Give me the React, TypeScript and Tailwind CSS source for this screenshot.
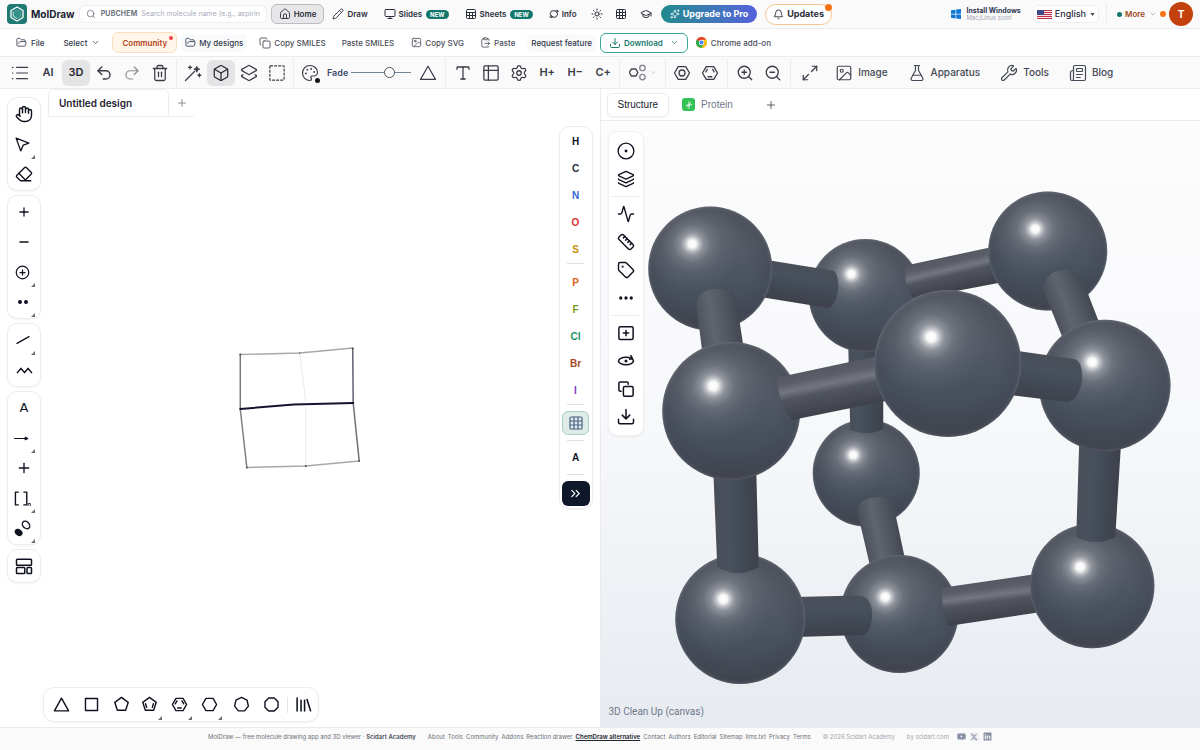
import type { ReactNode } from "react";
import {
  Activity, Bell, Box, ChevronDown, ChevronsRight, CirclePlus, ClipboardPaste, Copy,
  Download, Ellipsis, Eraser, FlaskConical, FolderOpen, GraduationCap, Grid3x3, Hand, House, Image as ImageIcon,
  Layers, Layers2, Maximize2, Minus, Monitor, Newspaper, Palette, Pencil, Plus,
  Redo2, Ruler, Search, Settings, Sparkles, Sun, Tag, Trash2, Type, Undo2,
  Wrench, ZoomIn, ZoomOut,
} from "lucide-react";
import { FaLinkedin, FaXTwitter, FaYoutube } from "react-icons/fa6";

type Glyph = { children: ReactNode; className?: string; width?: number };

function Draw({ children, className = "size-[18px]", width = 1.6 }: Glyph) {
  return (
    <svg viewBox="0 0 24 24" className={className} fill="none" stroke="currentColor" strokeWidth={width} strokeLinecap="round" strokeLinejoin="round" aria-hidden="true">
      {children}
    </svg>
  );
}

function Logo() {
  return (
    <svg viewBox="0 0 40 40" className="size-5 shrink-0" aria-hidden="true">
      <rect width="40" height="40" rx="8" fill="#1f7a74" />
      <path d="M20 6 32 13v14L20 34 8 27V13Z" fill="none" stroke="#fff" strokeWidth="2.600" strokeLinejoin="round" />
      <path d="M20 11.500 27.500 16v8.500L20 29l-7.500-4.500V16Z" fill="#2f9189" stroke="#7fc0b9" strokeWidth="1.200" />
      <path d="M12.500 15.500v9L20 29" fill="none" stroke="#e4f4f2" strokeWidth="1.500" />
    </svg>
  );
}

function Flag() {
  return (
    <svg viewBox="0 0 30 18" className="h-[9px] w-[15px]" aria-hidden="true">
      <rect width="30" height="18" fill="#f3e4e6" />
      {[0, 4, 8, 12, 16].map((y) => (
        <rect key={y} y={y} width="30" height="2" fill="#c2334b" />
      ))}
      <rect width="14" height="10" fill="#3c4a8c" />
    </svg>
  );
}

function ChromeLogo() {
  return (
    <svg viewBox="0 0 24 24" className="size-[11px]" aria-hidden="true">
      <circle cx="12" cy="12" r="12" fill="#fbc116" />
      <path d="M12 12 1.600 6A12 12 0 0 1 22.400 6Z" fill="#e33b2e" />
      <path d="M1.600 6A12 12 0 0 0 12 24l5.200-9L12 12Z" fill="#2da94f" />
      <path d="M12 6h10.400A12 12 0 0 1 12 24l5.200-9Z" fill="#fbc116" />
      <circle cx="12" cy="12" r="5.800" fill="#fff" />
      <circle cx="12" cy="12" r="4.500" fill="#4285f4" />
    </svg>
  );
}

function NavItem({ icon, label, isNew }: { icon: ReactNode; label: string; isNew?: boolean }) {
  return (
    <a href="#" className="flex h-5 items-center gap-[3px] px-2 text-[8px] font-semibold text-[#2b2e3b]">
      {icon}
      {label}
      {isNew && <span className="ml-px rounded-full bg-[#11766b] px-1 text-[6px] leading-[9px] font-bold text-white">NEW</span>}
    </a>
  );
}

function IconButton({ label, children, active }: { label: string; children: ReactNode; active?: boolean }) {
  return (
    <button
      type="button"
      aria-label={label}
      className={
        active
          ? "relative flex h-[26px] w-7 items-center justify-center rounded-md bg-[#e4e4e6] text-[11px] font-semibold text-[#24262f]"
          : "relative flex h-[26px] w-7 items-center justify-center text-[11px] font-semibold text-[#3a3d47]"
      }
    >
      {children}
    </button>
  );
}

function Divider() {
  return <span className="mx-[2px] h-7 w-px bg-[#ececef]" />;
}

function WideDivider() {
  return <span className="mx-[3px] h-7 w-px bg-[#ececef]" />;
}

function Corner() {
  return (
    <svg viewBox="0 0 4 4" className="absolute right-1 bottom-0 size-1" aria-hidden="true">
      <path d="M4 0v4H0Z" fill="#6d6d75" />
    </svg>
  );
}

function Tool({ label, children, more }: { label: string; children: ReactNode; more?: boolean }) {
  return (
    <button type="button" aria-label={label} className="relative flex h-[30px] w-[30px] items-center justify-center text-[#10131f]">
      {children}
      {more && <Corner />}
    </button>
  );
}

function Panel({ children }: { children: ReactNode }) {
  return <div className="flex flex-col items-center rounded-[10px] border border-[#ededf0] bg-white p-px shadow-xs">{children}</div>;
}

function TopBar() {
  return (
    <header className="flex h-[29px] items-center border-b border-[#ececee] bg-[#fafafb] px-[7px]">
      <a href="#" className="flex items-center gap-1 text-[10px] font-bold text-[#20222e]">
        <Logo />
        MolDraw
      </a>
      <label className="mr-1 ml-1 flex h-[18px] w-[188px] items-center gap-1 rounded-md border border-[#eeeef1] bg-white px-[6px]">
        <Search className="size-[10px] shrink-0 text-[#777b87]" strokeWidth={2} />
        <span className="ml-px text-[7px] font-bold tracking-wide text-[#6c7280]">PUBCHEM</span>
        <input
          className="min-w-0 flex-1 bg-transparent text-[7px] text-[#333] outline-none placeholder:text-[#a6abb8]"
          placeholder="Search molecule name (e.g., aspirin, caffeine)"
        />
      </label>
      <nav className="flex items-center">
        <a href="#" className="flex h-5 items-center gap-[3px] rounded-md border border-[#bcbcc2] bg-[#e7e7e9] px-[7px] text-[8px] font-semibold text-[#2b2e3b]">
          <House className="size-3" strokeWidth={1.800} />
          Home
        </a>
        <NavItem icon={<Pencil className="size-3" strokeWidth={1.800} />} label="Draw" />
        <NavItem icon={<Monitor className="size-3" strokeWidth={2} />} label="Slides" isNew />
        <NavItem
          icon={
            <Draw className="size-3" width={2}>
              <rect x="3" y="3" width="18" height="18" rx="2" />
              <path d="M3 9h18M3 15h18M9 9v12M15 9v12" />
            </Draw>
          }
          label="Sheets"
          isNew
        />
        <NavItem
          icon={
            <Draw className="size-[10px]" width={2.200}>
              <path d="M7 4.500h9L21 12l-4.500 7.500H8L3 12Z" />
              <circle cx="19" cy="5.500" r="2.500" fill="#fafafb" />
              <circle cx="5" cy="18.500" r="2.500" fill="#fafafb" />
            </Draw>
          }
          label="Info"
        />
        <button type="button" aria-label="Theme" className="flex w-6 justify-center text-[#2b2e3b]"><Sun className="size-3" strokeWidth={2} /></button>
        <button type="button" aria-label="Periodic table" className="flex w-[25px] justify-center text-[#2b2e3b]"><Grid3x3 className="size-3" strokeWidth={2} /></button>
        <button type="button" aria-label="Learn" className="flex w-6 justify-center text-[#2b2e3b]"><GraduationCap className="size-3" strokeWidth={2} /></button>
      </nav>
      <button type="button" className="ml-[3px] flex h-[18px] items-center gap-[3px] rounded-full bg-linear-to-r from-[#1d8a8c] to-[#5560dc] px-[9px] text-[9px] font-bold text-white">
        <Sparkles className="size-[10px]" strokeWidth={1.800} />
        Upgrade to Pro
      </button>
      <button type="button" className="relative ml-2 flex h-[21px] items-center gap-[3px] rounded-full border border-[#f4c48d] bg-white px-[7px] text-[9px] font-bold text-[#2b2e3b]">
        <Bell className="size-[11px]" strokeWidth={2} />
        Updates
        <span className="absolute -top-px -right-px size-[7px] rounded-full bg-[#f97316]" />
      </button>
      <div className="ml-auto flex items-center">
        <a href="#" className="flex items-center gap-[5px]">
          <svg viewBox="0 0 10 10" className="size-[10px]" fill="#0f78d4" aria-hidden="true">
            <path d="M0 1.300 4.500.7v4H0ZM5.200.6 10 0v4.700H5.200ZM0 5.400h4.500v4L0 8.700ZM5.200 5.400H10V10l-4.800-.6Z" />
          </svg>
          <span className="flex flex-col text-[7px] leading-[8px] font-bold text-[#2b3550]">
            Install Windows
            <span className="text-[6px] leading-[6px] font-normal text-[#a0a5b3]">Mac/Linux soon</span>
          </span>
        </a>
        <button type="button" className="ml-3 flex h-[18px] items-center gap-[3px] rounded-md border border-[#eeeef0] bg-white px-[3px] text-[9px] font-medium text-[#2b2e3b]">
          <Flag />
          English
          <svg viewBox="0 0 6 4" className="ml-px h-[3px] w-[5px]" aria-hidden="true"><path d="M0 0h6L3 4Z" fill="#555" /></svg>
        </button>
        <span className="mx-[7px] h-5 w-px bg-[#ececef]" />
        <button type="button" className="ml-[3px] flex items-center text-[8px] font-semibold text-[#a2481d]">
          <span className="mr-[3px] size-[5px] rounded-full bg-[#11766b]" />
          More
          <ChevronDown className="ml-1 size-2 text-[#9a9aa0]" />
        </button>
        <span className="mr-[3px] ml-[3px] size-[6px] rounded-full bg-[#f97316]" />
        <button type="button" aria-label="Account" className="flex size-6 items-center justify-center rounded-full bg-[#c2410c] text-[10px] font-bold text-white">T</button>
      </div>
    </header>
  );
}

function MenuBar() {
  return (
    <div className="flex h-[27px] items-center bg-white pl-4 text-[8px] font-medium text-[#33384a]">
      <button type="button" className="flex items-center gap-1"><FolderOpen className="size-[11px]" strokeWidth={1.800} />File</button>
      <button type="button" className="ml-[19px] flex items-center gap-1">Select<ChevronDown className="size-[9px]" /></button>
      <button type="button" className="relative ml-3 flex h-[21px] items-center rounded-md border border-[#f6dfc2] bg-[#fff5e8] px-[9px] font-semibold text-[#b5431b]">
        Community
        <span className="absolute top-[3px] right-[3px] size-1 rounded-full bg-[#ef4444]" />
      </button>
      <button type="button" className="ml-1 flex h-[18px] items-center gap-[3px] rounded bg-[#f8fafc] px-1"><FolderOpen className="size-[11px]" strokeWidth={1.800} />My designs</button>
      <button type="button" className="ml-3 flex items-center gap-[3px] text-[#4b4e58]"><Copy className="size-3" strokeWidth={1.800} />Copy SMILES</button>
      <button type="button" className="ml-4 text-[#4b4e58]">Paste SMILES</button>
      <button type="button" className="ml-[17px] flex items-center gap-[3px] text-[#4b4e58]"><ImageIcon className="size-[11px]" strokeWidth={1.800} />Copy SVG</button>
      <button type="button" className="ml-4 flex items-center gap-[3px] text-[#4b4e58]"><ClipboardPaste className="size-[11px]" strokeWidth={1.800} />Paste</button>
      <button type="button" className="ml-3 h-[18px] rounded bg-[#f8fafc] px-1">Request feature</button>
      <button type="button" className="ml-1 flex h-5 items-center gap-[3px] rounded-md border border-[#3aa596] bg-white px-2 font-semibold text-[#16786c]">
        <Download className="size-3" strokeWidth={2} />
        Download
        <ChevronDown className="ml-1 size-[9px]" />
      </button>
      <a href="#" className="ml-2 flex items-center gap-1 text-[#4b4e58]"><ChromeLogo />Chrome add-on</a>
    </div>
  );
}

function LinkTool({ icon, label }: { icon: ReactNode; label: string }) {
  return (
    <button type="button" className="flex items-center gap-[5px] text-[10px] font-medium text-[#444853]">
      {icon}
      {label}
    </button>
  );
}

function ToolBar() {
  const icon = "size-[18px]";
  return (
    <div className="flex h-[33px] items-center border-y border-[#ececee] bg-[#fafafb] pl-[6px]">
      <IconButton label="List">
        <Draw><path d="M7.500 4.500H22M7.500 12H22M7.500 19.500H22M2 4.500h.5M2 12h.5M2 19.500h.5" /></Draw>
      </IconButton>
      <IconButton label="AI">AI</IconButton>
      <IconButton label="3D" active>3D</IconButton>
      <IconButton label="Undo"><Undo2 className={icon} strokeWidth={1.900} /></IconButton>
      <IconButton label="Redo"><Redo2 className="size-[18px] text-[#8b8d95]" strokeWidth={1.600} /></IconButton>
      <IconButton label="Delete"><Trash2 className={icon} strokeWidth={1.700} /></IconButton>
      <Divider />
      <IconButton label="Clean up">
        <Draw width={1.700}>
          <path d="M2 22 14 10" />
          <path d="m17 3.500 1 2.500 2.500 1-2.500 1-1 2.500-1-2.500-2.500-1 2.500-1Z" fill="currentColor" />
          <path d="M8 2.500v4M6 4.500h4M20.500 13v4M18.500 15h4" />
        </Draw>
      </IconButton>
      <IconButton label="3D view" active><Box className={icon} strokeWidth={1.600} /></IconButton>
      <IconButton label="Layers"><Layers2 className={icon} strokeWidth={1.700} /></IconButton>
      <IconButton label="Select area">
        <Draw><rect x="2.500" y="2.500" width="19" height="19" rx="1" strokeDasharray="2.600 2.800" /></Draw>
      </IconButton>
      <Divider />
      <IconButton label="Colours">
        <Palette className={icon} strokeWidth={1.600} />
        <span className="absolute right-1 bottom-[3px] size-[5px] rounded-full bg-[#15161c]" />
      </IconButton>
      <label className="ml-[3px] flex items-center gap-[3px] text-[9px] font-semibold text-[#404a70]">
        Fade
        <input
          type="range"
          min={0}
          max={100}
          defaultValue={66}
          className="h-3 w-[60px] appearance-none bg-transparent [&::-webkit-slider-runnable-track]:h-px [&::-webkit-slider-runnable-track]:bg-[#71869c] [&::-webkit-slider-thumb]:-mt-[5px] [&::-webkit-slider-thumb]:size-[11px] [&::-webkit-slider-thumb]:appearance-none [&::-webkit-slider-thumb]:rounded-full [&::-webkit-slider-thumb]:border [&::-webkit-slider-thumb]:border-[#50545f] [&::-webkit-slider-thumb]:bg-white"
        />
      </label>
      <span className="w-[3px]" />
      <IconButton label="Triangle"><Draw><path d="M12 3 22 20.500H2Z" /></Draw></IconButton>
      <WideDivider />
      <IconButton label="Text"><Type className={icon} strokeWidth={1.700} /></IconButton>
      <IconButton label="Table">
        <Draw width={1.700}><rect x="2.500" y="2.500" width="19" height="19" rx="1.500" /><path d="M2.500 8.500h19M8.500 2.500v19" /></Draw>
      </IconButton>
      <IconButton label="Settings"><Settings className={icon} strokeWidth={1.700} /></IconButton>
      <IconButton label="Add hydrogens">H+</IconButton>
      <IconButton label="Remove hydrogens">H−</IconButton>
      <IconButton label="Add carbon">C+</IconButton>
      <Divider />
      <button type="button" aria-label="Fragments" className="flex h-[26px] w-[41px] items-center justify-center gap-1 text-[#44474f]">
        <Draw className="size-[17px]" width={2}>
          <path d="M3.500 7h6l3 5-3 5h-6l-3-5Z" />
          <circle cx="19" cy="5.500" r="3.800" stroke="#8b8d95" />
          <circle cx="19" cy="18.500" r="3.800" stroke="#8b8d95" />
        </Draw>
        <ChevronDown className="size-[7px] text-[#b5b5bb]" />
      </button>
      <Divider />
      <IconButton label="Benzene ring">
        <Draw width={1.700}><path d="M7 3.500h10L22 12l-5 8.500H7L2 12Z" /><circle cx="12" cy="12" r="4" /></Draw>
      </IconButton>
      <IconButton label="Kekulé ring">
        <Draw width={1.700}><path d="M7 3.500h10L22 12l-5 8.500H7L2 12Z" /><path d="M9.500 17h5M6.500 10.500l2-3.500M17.500 10.500l-2-3.500" /></Draw>
      </IconButton>
      <WideDivider />
      <IconButton label="Zoom in"><ZoomIn className={icon} strokeWidth={1.700} /></IconButton>
      <IconButton label="Zoom out"><ZoomOut className={icon} strokeWidth={1.700} /></IconButton>
      <WideDivider />
      <span className="w-[2px]" />
      <IconButton label="Fit"><Maximize2 className={icon} strokeWidth={1.600} /></IconButton>
      <div className="ml-[11px] flex items-center gap-5">
        <LinkTool icon={<ImageIcon className="size-[18px]" strokeWidth={1.600} />} label="Image" />
        <LinkTool icon={<FlaskConical className="size-[18px]" strokeWidth={1.600} />} label="Apparatus" />
        <LinkTool icon={<Wrench className="size-[18px]" strokeWidth={1.600} />} label="Tools" />
        <LinkTool icon={<Newspaper className="size-[18px]" strokeWidth={1.600} />} label="Blog" />
      </div>
    </div>
  );
}

function SideTools() {
  return (
    <div className="absolute top-2 left-[7px] flex flex-col gap-1">
      <Panel>
        <Tool label="Pan"><Hand className="size-[18px]" strokeWidth={1.900} /></Tool>
        <Tool label="Select" more>
          <Draw className="mr-[3px] size-[17px]" width={1.900}><path d="M3 3l18 7-8 3-3.500 8Z" /></Draw>
        </Tool>
        <Tool label="Erase"><Eraser className="size-[18px]" strokeWidth={1.800} /></Tool>
      </Panel>
      <Panel>
        <Tool label="Positive charge"><Plus className="size-[14px]" strokeWidth={2.200} /></Tool>
        <Tool label="Negative charge"><Minus className="size-[14px]" strokeWidth={2.200} /></Tool>
        <Tool label="Circled charge" more><CirclePlus className="mr-[3px] size-[15px]" strokeWidth={2} /></Tool>
        <Tool label="Lone pair" more>
          <svg viewBox="0 0 12 6" className="mr-[3px] h-[6px] w-3" fill="#10131f" aria-hidden="true"><circle cx="3" cy="3" r="2" /><circle cx="9" cy="3" r="2" /></svg>
        </Tool>
      </Panel>
      <Panel>
        <Tool label="Bond" more><Draw className="mr-[3px] size-4" width={2}><path d="M3 17 21 7" /></Draw></Tool>
        <Tool label="Chain"><Draw className="size-[17px]" width={2.200}><path d="m2 15 5-6 5 6 5-6 5 6" /></Draw></Tool>
      </Panel>
      <Panel>
        <Tool label="Text"><span className="font-['DejaVu_Sans',sans-serif] text-[13px]">A</span></Tool>
        <Tool label="Reaction arrow" more>
          <Draw className="mr-[5px] size-[15px]" width={1.900}><path d="M1 12h20" /><path d="m18 10 4 2-4 2Z" fill="currentColor" /></Draw>
        </Tool>
        <Tool label="Plus"><Plus className="size-4" strokeWidth={2} /></Tool>
        <Tool label="Brackets" more>
          <Draw className="mr-[3px] size-[17px]" width={2}>
            <path d="M6 3H2v18h4M14 3h4v18h-4" />
            <path d="M20 22v-3h3v3" strokeWidth="1.200" />
          </Draw>
        </Tool>
        <Tool label="Orbital" more>
          <Draw className="mr-[3px] size-[17px]" width={1.900}>
            <ellipse cx="6.500" cy="17.500" rx="5" ry="3.500" transform="rotate(35 6.500 17.500)" fill="currentColor" />
            <ellipse cx="17" cy="7" rx="6" ry="4.500" transform="rotate(45 17 7)" />
          </Draw>
        </Tool>
      </Panel>
      <Panel>
        <Tool label="Templates">
          <Draw className="size-[18px]" width={2}><rect x="2" y="3" width="20" height="8" rx="1" /><rect x="2" y="14" width="11" height="8" rx="1" /><rect x="16" y="14" width="6" height="8" rx="1" /></Draw>
        </Tool>
      </Panel>
    </div>
  );
}

function Element({ symbol, color }: { symbol: string; color: string }) {
  return <button type="button" className="h-[27px] w-7 text-center" style={{ color }}>{symbol}</button>;
}

const mainElements = [["H", "#10131f"], ["C", "#2b2e3b"], ["N", "#3566d6"], ["O", "#dc2f2f"], ["S", "#c98c0a"]];
const moreElements = [["P", "#dc6318"], ["F", "#7a9a16"], ["Cl", "#1f8f60"], ["Br", "#a84a22"], ["I", "#7c3aca"]];

function Elements() {
  const rule = "h-px w-[17px] bg-[#dfdfe3]";
  return (
    <div className="absolute top-[37px] right-[7px] flex w-[34px] flex-col items-center rounded-[10px] border border-[#ededf0] bg-white pt-px pb-[2px] font-['Liberation_Sans',sans-serif] text-[10px] font-bold shadow-xs">
      {mainElements.map(([s, c]) => <Element key={s} symbol={s} color={c} />)}
      <span className={rule} />
      <span className="h-[5px]" />
      {moreElements.map(([s, c]) => <Element key={s} symbol={s} color={c} />)}
      <span className={rule} />
      <button type="button" aria-label="Periodic table" className="mt-[6px] mb-[5px] flex h-6 w-[27px] items-center justify-center rounded-md border border-[#a9cfc6] bg-[#deebe8] text-[#4a6484]">
        <Grid3x3 className="size-4" strokeWidth={1.800} />
      </button>
      <span className={rule} />
      <button type="button" className="my-[3px] h-[27px] w-7 text-center text-[#10131f]">A</button>
      <span className={rule} />
      <button type="button" aria-label="Expand" className="mt-[6px] flex h-[25px] w-7 items-center justify-center rounded-md bg-[#0f172a] text-white">
        <ChevronsRight className="size-[15px]" strokeWidth={1.800} />
      </button>
    </div>
  );
}

function polygon(n: number, turn: number) {
  return Array.from({ length: n }, (_, i) => {
    const a = ((i * 360) / n + turn) * (Math.PI / 180);
    return `${(12 + 10 * Math.sin(a)).toFixed(2)},${(12 - 10 * Math.cos(a)).toFixed(2)}`;
  }).join(" ");
}

function Rings() {
  const size = "size-[17px]";
  const shifted = "mr-[3px] size-[17px]";
  return (
    <div className="absolute bottom-[5px] left-[43px] flex h-[35px] items-center rounded-[11px] border border-[#ededf0] bg-white pl-[2px] shadow-xs">
      <Tool label="Cyclopropane"><Draw className={size} width={2}><path d="M12 3 22 21H2Z" /></Draw></Tool>
      <Tool label="Cyclobutane"><Draw className={size} width={2}><path d="M3.500 3.500h17v17h-17Z" /></Draw></Tool>
      <Tool label="Cyclopentane"><Draw className={size} width={2}><polygon points={polygon(5, 0)} /></Draw></Tool>
      <Tool label="Cyclopentadiene" more><Draw className={shifted} width={2}><polygon points={polygon(5, 0)} /><path d="m6.500 11 1.500 5M17.500 11 16 16" /></Draw></Tool>
      <Tool label="Benzene" more><Draw className={shifted} width={2}><polygon points={polygon(6, 30)} /><path d="M9.500 17h5M6 11l2.500-4M18 11l-2.500-4" /></Draw></Tool>
      <Tool label="Cyclohexane" more><Draw className={shifted} width={2}><polygon points={polygon(6, 30)} /></Draw></Tool>
      <Tool label="Cycloheptane"><Draw className={size} width={2}><polygon points={polygon(7, 0)} /></Draw></Tool>
      <Tool label="Cyclooctane"><Draw className={size} width={2}><polygon points={polygon(8, 22.5)} /></Draw></Tool>
      <span className="ml-px h-4 w-px bg-[#e4e4e8]" />
      <Tool label="Library"><Draw className={size} width={2.200}><path d="M3 3v18M8.500 6v15M13.500 6v15M17 5l5 16" /></Draw></Tool>
    </div>
  );
}

function DrawingCanvas() {
  return (
    <section className="relative min-w-0 flex-1 overflow-hidden bg-white">
      <svg viewBox="0 89 600 638" className="absolute inset-0 size-full" fill="none" strokeLinecap="round">
        <path d="M240.500 354.500 300 353 353 348" stroke="#a8a8aa" strokeWidth="1.400" />
        <path d="M300 353 306 401M306 408V466" stroke="#ececee" strokeWidth="1.200" />
        <path d="M240.500 354.500V409" stroke="#77777c" strokeWidth="1.500" />
        <path d="M240.500 409 247 467.500" stroke="#808085" strokeWidth="1.500" />
        <path d="M247 467.500 306 466 359.500 461" stroke="#a8a8aa" strokeWidth="1.400" />
        <path d="M353 348.500 353.500 403" stroke="#5f5f72" strokeWidth="1.500" />
        <path d="M353.500 403 359.500 461" stroke="#707076" strokeWidth="1.500" />
        <path d="M240.500 409 294 404.500 353.500 403" stroke="#12142e" strokeWidth="2" />
        <g fill="#555">
          <circle cx="240.500" cy="354.500" r="1" /><circle cx="300" cy="353" r=".8" /><circle cx="353" cy="348.500" r="1" />
          <circle cx="247" cy="467.500" r="1" /><circle cx="306" cy="466" r="1" /><circle cx="359.500" cy="461" r="1" />
        </g>
      </svg>
      <div className="relative ml-12 flex h-7 w-[146px] items-stretch border-b border-[#ededf0]">
        <button type="button" className="w-[121px] rounded-t-md border-x border-t border-[#ededf0] bg-white pl-[10px] text-left text-[10px] font-semibold text-[#1f2130]">Untitled design</button>
        <button type="button" aria-label="New design" className="flex flex-1 items-center justify-center text-[#7d7f8a]"><Plus className="size-3" strokeWidth={1.700} /></button>
      </div>
      <SideTools />
      <Elements />
      <Rings />
    </section>
  );
}

type Atom3D = { x: number; y: number; r: number; hx: number; hy: number };
const atoms: Record<string, Atom3D> = {
  a1: { x: 710, y: 268.5, r: 62, hx: 692, hy: 244 },
  a2: { x: 865, y: 295.500, r: 56.500, hx: 851, hy: 274 },
  a3: { x: 1047.500, y: 251, r: 59.500, hx: 1035, hy: 229 },
  a4: { x: 731, y: 411, r: 69, hx: 713, hy: 386 },
  a5: { x: 947.500, y: 363.500, r: 73.500, hx: 931, hy: 337 },
  a6: { x: 1104.500, y: 385.500, r: 65.800, hx: 1092, hy: 362 },
  a7: { x: 866, y: 473, r: 53.500, hx: 853, hy: 455 },
  a8: { x: 740, y: 619, r: 65, hx: 723, hy: 599 },
  a9: { x: 899, y: 614, r: 59, hx: 885, hy: 597 },
  a10: { x: 1092, y: 586, r: 62.200, hx: 1080, hy: 567 },
};

type Bond3D = { d: string; line: [number, number, number, number]; tone: "soft" | "shine" | "flat" };
const bonds: Record<string, Bond3D> = {
  b12: { d: "M760 259 832 270.500Q838 272 838 287Q837 304 828 308L760 297Z", line: [800, 265, 794, 302], tone: "flat" },
  b23: { d: "M905 269Q904 266 908 265L992 247 998 283 914 299Q904 288 905 269Z", line: [945, 257, 953, 291], tone: "shine" },
  b14: { d: "M696 304Q698 289 717 289Q734 289 736 300L744 352 702 352Z", line: [697, 322, 739, 316], tone: "soft" },
  b36: { d: "M1043 290Q1045 271 1063 270Q1078 269 1082 279L1101 328 1064 342Z", line: [1053, 312, 1090, 298], tone: "soft" },
  b45: { d: "M777 380Q777 377 784 376L882 355 890 400 792 420Q779 406 777 380Z", line: [828, 366, 837, 411], tone: "shine" },
  b56: { d: "M1010 350 1074 359Q1082 361 1082 379Q1079 400 1067 402L1010 395Z", line: [1048, 356, 1042, 400], tone: "flat" },
  b27: { d: "M848 345H883V429Q867 437 850 430Z", line: [848, 400, 883, 400], tone: "flat" },
  b79: { d: "M857 511Q858 498 877 497Q892 497 893 504L905 560 870 567Z", line: [863, 532, 899, 525], tone: "soft" },
  b48: { d: "M713 470H756L758.500 567Q738 579 717 567Z", line: [715, 520, 758, 519], tone: "flat" },
  b610: { d: "M1079 440H1121L1115 537Q1096 547 1076 537Z", line: [1078, 490, 1118, 492], tone: "flat" },
  b89: { d: "M795 597 858 595.500Q871 596 872 614Q871 633 863 635L795 637Z", line: [830, 596, 831, 636], tone: "flat" },
  b910: { d: "M942 591Q942 588 947 587L1036 574 1041 612 948 626Q941 610 942 591Z", line: [985, 581, 990, 620], tone: "shine" },
};
const tones = {
  soft: [["0", "#4d525c"], ["0.350", "#60646e"], ["0.600", "#555a65"], ["1", "#424751"]],
  shine: [["0", "#555861"], ["0.200", "#5b5e68"], ["0.380", "#74767f"], ["0.550", "#50545e"], ["1", "#3e414a"]],
  flat: [["0", "#4a4f59"], ["0.300", "#48515c"], ["0.600", "#424a55"], ["1", "#3e414b"]],
};
const drawOrder = [
  "a7", "b27", "a2", "b23", "a3", "b12", "a1", "b79", "a9", "b910", "a10", "b89", "a8",
  "b14", "b48", "a4", "b36", "b610", "a6", "b56", "b45", "a5",
];

function Scene() {
  return (
    <svg viewBox="601 121 599 606" className="absolute inset-0 size-full" role="img" aria-label="3D ball and stick model">
      <defs>
        <linearGradient id="body" x1="0" y1="0" x2="0" y2="1">
          <stop offset="0" stopColor="#585c66" />
          <stop offset="0.350" stopColor="#545a65" />
          <stop offset="0.650" stopColor="#48525e" />
          <stop offset="0.850" stopColor="#444b56" />
          <stop offset="1" stopColor="#42444f" />
        </linearGradient>
        <radialGradient id="rim">
          <stop offset="0.600" stopColor="#3e424d" stopOpacity="0" />
          <stop offset="0.940" stopColor="#3e424d" stopOpacity="0.380" />
          <stop offset="0.975" stopColor="#4c515c" stopOpacity="0.400" />
          <stop offset="1" stopColor="#7a7e88" stopOpacity="0.350" />
        </radialGradient>
        <radialGradient id="shine">
          <stop offset="0" stopColor="#fff" />
          <stop offset="0.080" stopColor="#fff" stopOpacity="0.960" />
          <stop offset="0.140" stopColor="#f1f1f3" stopOpacity="0.720" />
          <stop offset="0.230" stopColor="#d4d6da" stopOpacity="0.460" />
          <stop offset="0.400" stopColor="#b4b7be" stopOpacity="0.250" />
          <stop offset="0.650" stopColor="#9da1aa" stopOpacity="0.100" />
          <stop offset="1" stopColor="#9da1aa" stopOpacity="0" />
        </radialGradient>
        {Object.entries(atoms).map(([id, a]) => (
          <clipPath key={id} id={`c-${id}`}><circle cx={a.x} cy={a.y} r={a.r} /></clipPath>
        ))}
        {Object.entries(bonds).map(([id, b]) => (
          <linearGradient key={id} id={`g-${id}`} gradientUnits="userSpaceOnUse" x1={b.line[0]} y1={b.line[1]} x2={b.line[2]} y2={b.line[3]}>
            {tones[b.tone].map(([offset, color]) => <stop key={offset} offset={offset} stopColor={color} />)}
          </linearGradient>
        ))}
      </defs>
      {drawOrder.map((id) => {
        const bond = bonds[id];
        if (bond) return <path key={id} d={bond.d} fill={`url(#g-${id})`} />;
        const a = atoms[id];
        return (
          <g key={id}>
            <circle cx={a.x} cy={a.y} r={a.r} fill="url(#body)" />
            <circle cx={a.x} cy={a.y} r={a.r} fill="url(#rim)" />
            <circle cx={a.hx} cy={a.hy} r={a.r * 0.78} fill="url(#shine)" clipPath={`url(#c-${id})`} />
          </g>
        );
      })}
    </svg>
  );
}

function ViewTool({ label, children }: { label: string; children: ReactNode }) {
  return <button type="button" aria-label={label} className="flex h-7 w-8 items-center justify-center">{children}</button>;
}

function Viewer() {
  const icon = "size-[18px]";
  const rule = "my-[3px] h-px w-[27px] bg-[#ebebee]";
  return (
    <section className="flex min-w-0 flex-1 flex-col border-l border-[#ebebee]">
      <div className="flex h-8 items-center border-b border-[#ebebee] bg-white pl-[6px] font-['Liberation_Sans',sans-serif] text-[10px]">
        <button type="button" className="h-6 rounded-md border border-[#ececef] bg-white px-[10px] text-[#20222e] shadow-xs">Structure</button>
        <button type="button" className="ml-[13px] flex items-center gap-[6px] text-[#6f7689]">
          <span className="flex size-[13px] items-center justify-center rounded-[3px] bg-[#34c155] text-white">
            <Draw className="size-[10px]" width={2}><path d="M12 4v7l-7 2M12 20v-7l7-2M8 17l8-10" /></Draw>
          </span>
          Protein
        </button>
        <button type="button" aria-label="New view" className="ml-8 flex text-[#4b4e58]"><Plus className="size-3" strokeWidth={1.800} /></button>
      </div>
      <div className="relative flex-1 overflow-hidden bg-linear-to-b from-[#fcfcfd] via-[#f7f8fa] to-[#e7ebf1]">
        <Scene />
        <div className="absolute top-[10px] left-[7px] flex w-9 flex-col items-center rounded-[9px] border border-[#f0f0f2] bg-white pt-[5px] pb-1 text-[#10131f] shadow-xs">
          <ViewTool label="Atoms"><Draw className={icon} width={1.800}><circle cx="12" cy="12" r="10.500" /><circle cx="12" cy="12" r="1" fill="currentColor" /></Draw></ViewTool>
          <ViewTool label="Layers"><Layers className={icon} strokeWidth={1.800} /></ViewTool>
          <span className={rule} />
          <ViewTool label="Energy"><Activity className={icon} strokeWidth={1.900} /></ViewTool>
          <ViewTool label="Measure"><Ruler className={icon} strokeWidth={1.900} /></ViewTool>
          <ViewTool label="Labels"><Tag className={icon} strokeWidth={1.900} /></ViewTool>
          <ViewTool label="More"><Ellipsis className={icon} strokeWidth={2.400} /></ViewTool>
          <span className={rule} />
          <ViewTool label="Add"><Draw className={icon} width={2}><rect x="2.500" y="3.500" width="19" height="17" rx="2" /><path d="M12 8.500v7M8.500 12h7" /></Draw></ViewTool>
          <ViewTool label="Rotate">
            <Draw className={icon} width={2.100}><ellipse cx="12" cy="12" rx="10" ry="5" /><circle cx="12" cy="12" r="1" fill="currentColor" /><path d="m18.500 5 2 3.500-3.500 1" /></Draw>
          </ViewTool>
          <ViewTool label="Copy">
            <Draw className={icon} width={2}><rect x="8.500" y="8.500" width="13" height="13" rx="2" /><path d="M5.500 15h-1a2 2 0 0 1-2-2V4.500a2 2 0 0 1 2-2H13a2 2 0 0 1 2 2v1" /></Draw>
          </ViewTool>
          <ViewTool label="Export"><Draw className={icon} width={2}><path d="M12 2v12M7 9.500l5 5 5-5M2 15v4a2 2 0 0 0 2 2h16a2 2 0 0 0 2-2v-4" /></Draw></ViewTool>
        </div>
        <p className="absolute bottom-[9px] left-2 font-[Roboto,sans-serif] text-[10px] leading-3 text-[#707789]">3D Clean Up (canvas)</p>
      </div>
    </section>
  );
}

const footerLinks = ["About", "Tools", "Community", "Addons", "Reaction drawer", "ChemDraw alternative", "Contact", "Authors", "Editorial", "Sitemap", "llms.txt", "Privacy", "Terms"];

function Footer() {
  const social = "flex size-[9px] items-center justify-center bg-[#f0f2f6]";
  return (
    <footer className="flex h-[23px] items-center justify-center border-t border-[#ebebee] bg-[#fafafa] pb-[5px] text-[6px] whitespace-nowrap text-[#6c6f78]">
      <p>MolDraw — free molecule drawing app and 3D viewer · <a href="#" className="font-semibold text-[#4c4f5a]">Scidart Academy</a></p>
      <nav className="ml-3 flex gap-[3px]">
        {footerLinks.map((l) => (
          <a key={l} href="#" className={l.startsWith("ChemDraw") ? "font-semibold text-[#23252f] underline" : ""}>{l}</a>
        ))}
      </nav>
      <span className="ml-3 text-[#a3a6ae]">© 2026 Scidart Academy</span>
      <span className="ml-3 text-[#a3a6ae]">by scidart.com</span>
      <div className="ml-2 flex gap-1 text-[#8790a3]">
        <a href="#" aria-label="YouTube" className={social}><FaYoutube className="size-[9px]" /></a>
        <a href="#" aria-label="X" className={social}><FaXTwitter className="size-2" /></a>
        <a href="#" aria-label="LinkedIn" className={social}><FaLinkedin className="size-[9px]" /></a>
      </div>
    </footer>
  );
}

export default function App() {
  return (
    <div className="flex h-screen flex-col overflow-hidden bg-white font-[Inter,sans-serif]">
      <TopBar />
      <MenuBar />
      <ToolBar />
      <main className="flex min-h-0 flex-1">
        <DrawingCanvas />
        <Viewer />
      </main>
      <Footer />
    </div>
  );
}
